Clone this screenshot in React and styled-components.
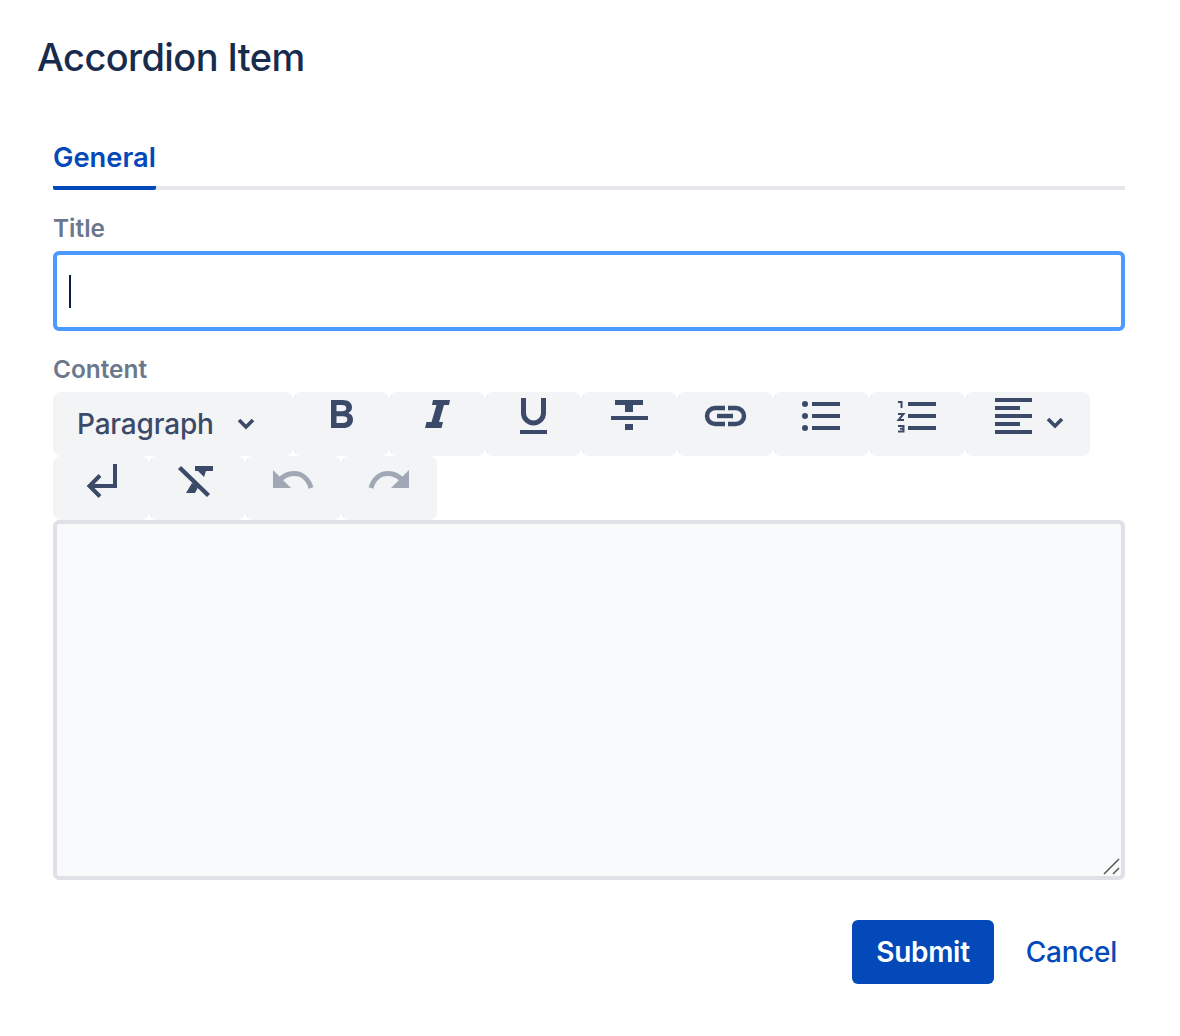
import React from "react";
import styled, { createGlobalStyle } from "styled-components";

const Global = createGlobalStyle`
  html, body { margin: 0; padding: 0; background: #fff; }
  body { font-family: Inter, "Liberation Sans", sans-serif; }
  * { box-sizing: border-box; }
`;

const Dialog = styled.div`
  width: 1180px;
  height: 1036px;
  padding: 0 55px 0 38px;
`;
const Heading = styled.h1`
  margin: 0 0 0 -1px;
  height: 114px;
  padding-top: 35px;
  font-size: 38px;
  line-height: 44px;
  font-weight: 500;
  letter-spacing: -0.6px;
  color: #172b4d;
`;
const Body = styled.div`
  margin-left: 15px;
`;
const TabStrip = styled.div`
  display: flex;
  height: 76px;
  border-bottom: 4px solid #e6e7eb;
`;
const Tab = styled.div`
  height: 76px;
  padding-top: 25px;
  font-size: 27.3px;
  line-height: 38px;
  font-weight: 600;
  color: #0449ba;
  border-bottom: 4px solid #0449ba;
  border-radius: 0 0 2px 2px;
`;
const Label = styled.div`
  height: 32px;
  margin-top: ${(p) => p.$top || 0}px;
  margin-bottom: 7px;
  font-size: 24.4px;
  line-height: 32px;
  font-weight: 600;
  color: #6b778c;
`;
const TitleField = styled.div`
  display: flex;
  align-items: center;
  height: 80px;
  margin-bottom: 22px;
  padding-left: 12px;
  border: 4px solid #4c9aff;
  border-radius: 6px;
  background: #fff;
`;
const Caret = styled.span`
  display: block;
  width: 2px;
  height: 33px;
  background: #091e42;
`;
const Toolbar = styled.div`
  display: flex;
  flex-wrap: wrap;
`;
const ToolButton = styled.div`
  display: flex;
  align-items: flex-start;
  flex: none;
  width: ${(p) => p.$width || 96}px;
  height: 64px;
  padding-left: 24px;
  border-radius: 8px;
  background: #f3f4f6;
  color: ${(p) => (p.$disabled ? "#a0a8b6" : "#3b4a68")};
`;
const FormatSelect = styled(ToolButton)`
  align-items: center;
  padding: 0 0 0 24px;
  gap: 22px;
`;
const FormatText = styled.span`
  font-size: 28px;
  line-height: 64px;
  font-weight: 500;
  letter-spacing: -0.2px;
  color: #3b4a68;
`;
const Icon = styled.svg`
  display: block;
  flex: none;
  width: ${(p) => p.$w || 48}px;
  height: ${(p) => p.$h || 48}px;
`;
const SmallChevron = styled(Icon)`
  margin: 24px 0 0 8px;
`;
const EditorFrame = styled.div`
  position: relative;
  height: 360px;
`;
const Editor = styled.textarea`
  display: block;
  width: 100%;
  height: 100%;
  margin: 0;
  padding: 0;
  border: 4px solid #dfe1e6;
  border-radius: 6px;
  background: #f9fafb;
  outline: none;
  resize: none;
`;
const ResizeGrip = styled.svg`
  position: absolute;
  right: 4px;
  bottom: 4px;
  width: 18px;
  height: 18px;
`;
const Footer = styled.div`
  display: flex;
  justify-content: flex-end;
  align-items: center;
  margin-top: 40px;
`;
const SubmitButton = styled.button`
  width: 142px;
  height: 64px;
  padding: 0;
  border: 0;
  border-radius: 6px;
  background: #0449ba;
  color: #fff;
  font-family: inherit;
  font-size: 28px;
  font-weight: 600;
  letter-spacing: -0.3px;
`;
const CancelButton = styled.button`
  width: 131px;
  height: 64px;
  padding: 0 8px 0 0;
  border: 0;
  background: transparent;
  color: #0449ba;
  font-family: inherit;
  font-size: 28px;
  font-weight: 500;
  letter-spacing: -0.3px;
  text-align: right;
`;

const Chevron = ({ as: C = Icon }) => (
  <C $w={20} $h={14} viewBox="0 0 20 14" fill="none" stroke="currentColor" strokeWidth="3.6">
    <path d="M3 3l7 7 7-7" />
  </C>
);

const I = ({ children }) => (
  <Icon viewBox="0 0 48 48" fill="currentColor">
    {children}
  </Icon>
);

const line = { stroke: "currentColor", fill: "none" };

export default function App() {
  return (
    <Dialog>
      <Global />
      <Heading>Accordion Item</Heading>
      <Body>
        <TabStrip>
          <Tab>General</Tab>
        </TabStrip>
        <Label $top={22}>Title</Label>
        <TitleField role="textbox">
          <Caret />
        </TitleField>
        <Label>Content</Label>
        <Toolbar>
          <FormatSelect $width={240}>
            <FormatText>Paragraph</FormatText>
            <Chevron />
          </FormatSelect>
          <ToolButton>
            <I>
              <path
                fillRule="evenodd"
                d="M14 8h11.500c6 0 9.500 2.800 9.500 7.200 0 2.800-1.400 4.800-3.800 5.800 3 .9 4.800 3.200 4.800 6.400C36 32.800 32.200 36 26 36H14zM19.500 13v6.300h5.500c2.800 0 4.300-1.100 4.300-3.200S27.800 13 25 13zM19.500 24.300V31h6.300c3 0 4.600-1.200 4.600-3.400s-1.600-3.300-4.600-3.300z"
              />
            </I>
          </ToolButton>
          <ToolButton>
            <I>
              <path d="M20 8h17l-1 5h-5l-5 17h4l-1.500 6H12l1.500-6h5l5-17h-4.500z" />
            </I>
          </ToolButton>
          <ToolButton>
            <I>
              <path d="M14.500 6v15a10 10 0 0 0 20 0V6" {...line} strokeWidth="5" />
              <rect x="11" y="38" width="27" height="4" />
            </I>
          </ToolButton>
          <ToolButton>
            <I>
              <path d="M10 8h28v5H28v7h-8v-7H10z" />
              <rect x="6" y="24" width="37" height="4" />
              <rect x="20" y="32" width="8" height="6" />
            </I>
          </ToolButton>
          <ToolButton>
            <I>
              <g {...line} strokeWidth="4.400">
                <path d="M24 16H14a8 8 0 0 0 0 16h10" />
                <path d="M27 16h8a8 8 0 0 1 0 16h-8" />
                <path d="M16 24h16" />
              </g>
            </I>
          </ToolButton>
          <ToolButton>
            <I>
              <circle cx="8" cy="12" r="3" />
              <circle cx="8" cy="24" r="3" />
              <circle cx="8" cy="36" r="3" />
              <rect x="15" y="10" width="28" height="4" />
              <rect x="15" y="22" width="28" height="4" />
              <rect x="15" y="34" width="28" height="4" />
            </I>
          </ToolButton>
          <ToolButton>
            <I>
              <g {...line} strokeWidth="2">
                <path d="M5 10h3.500v6" />
                <path d="M5 22h5.500L5.500 28H11" />
                <path d="M5 34h5.500v5.500H5M7 36.700h3.500" />
              </g>
              <rect x="15" y="10" width="28" height="4" />
              <rect x="15" y="22" width="28" height="4" />
              <rect x="15" y="34" width="28" height="4" />
            </I>
          </ToolButton>
          <ToolButton $width={125}>
            <I>
              <rect x="6" y="6" width="37" height="4" />
              <rect x="6" y="14" width="25" height="4" />
              <rect x="6" y="22" width="37" height="4" />
              <rect x="6" y="30" width="25" height="4" />
              <rect x="6" y="38" width="37" height="4" />
            </I>
            <Chevron as={SmallChevron} />
          </ToolButton>
          <ToolButton>
            <I>
              <path d="M38 8v22H14M23 19.500L12.500 30 23 40.500" {...line} strokeWidth="4" />
            </I>
          </ToolButton>
          <ToolButton>
            <I>
              <path d="M22 10h18v5h-7l-2 6-6-6h-3zM19 27l6.500 3.500L22 37h-9z" />
              <path d="M6.500 11.500l29 28" {...line} strokeWidth="4.500" />
            </I>
          </ToolButton>
          <ToolButton $disabled>
            <I>
              <path d="M4 14v18h18z" />
              <path d="M10 25c4-5 9.500-7.500 15-7.500 8 0 14.500 5.500 17 14.500" {...line} strokeWidth="5" />
            </I>
          </ToolButton>
          <ToolButton $disabled>
            <I>
              <path d="M44 14v18H26z" />
              <path d="M38 25c-4-5-9.500-7.500-15-7.500C15 17.500 8.500 23 6 32" {...line} strokeWidth="5" />
            </I>
          </ToolButton>
        </Toolbar>
        <EditorFrame>
          <Editor aria-label="Content" />
          <ResizeGrip viewBox="0 0 18 18" fill="none" stroke="#555" strokeWidth="1.500">
            <path d="M1 16L16 1M10 16l6-6" />
          </ResizeGrip>
        </EditorFrame>
        <Footer>
          <SubmitButton>Submit</SubmitButton>
          <CancelButton>Cancel</CancelButton>
        </Footer>
      </Body>
    </Dialog>
  );
}
